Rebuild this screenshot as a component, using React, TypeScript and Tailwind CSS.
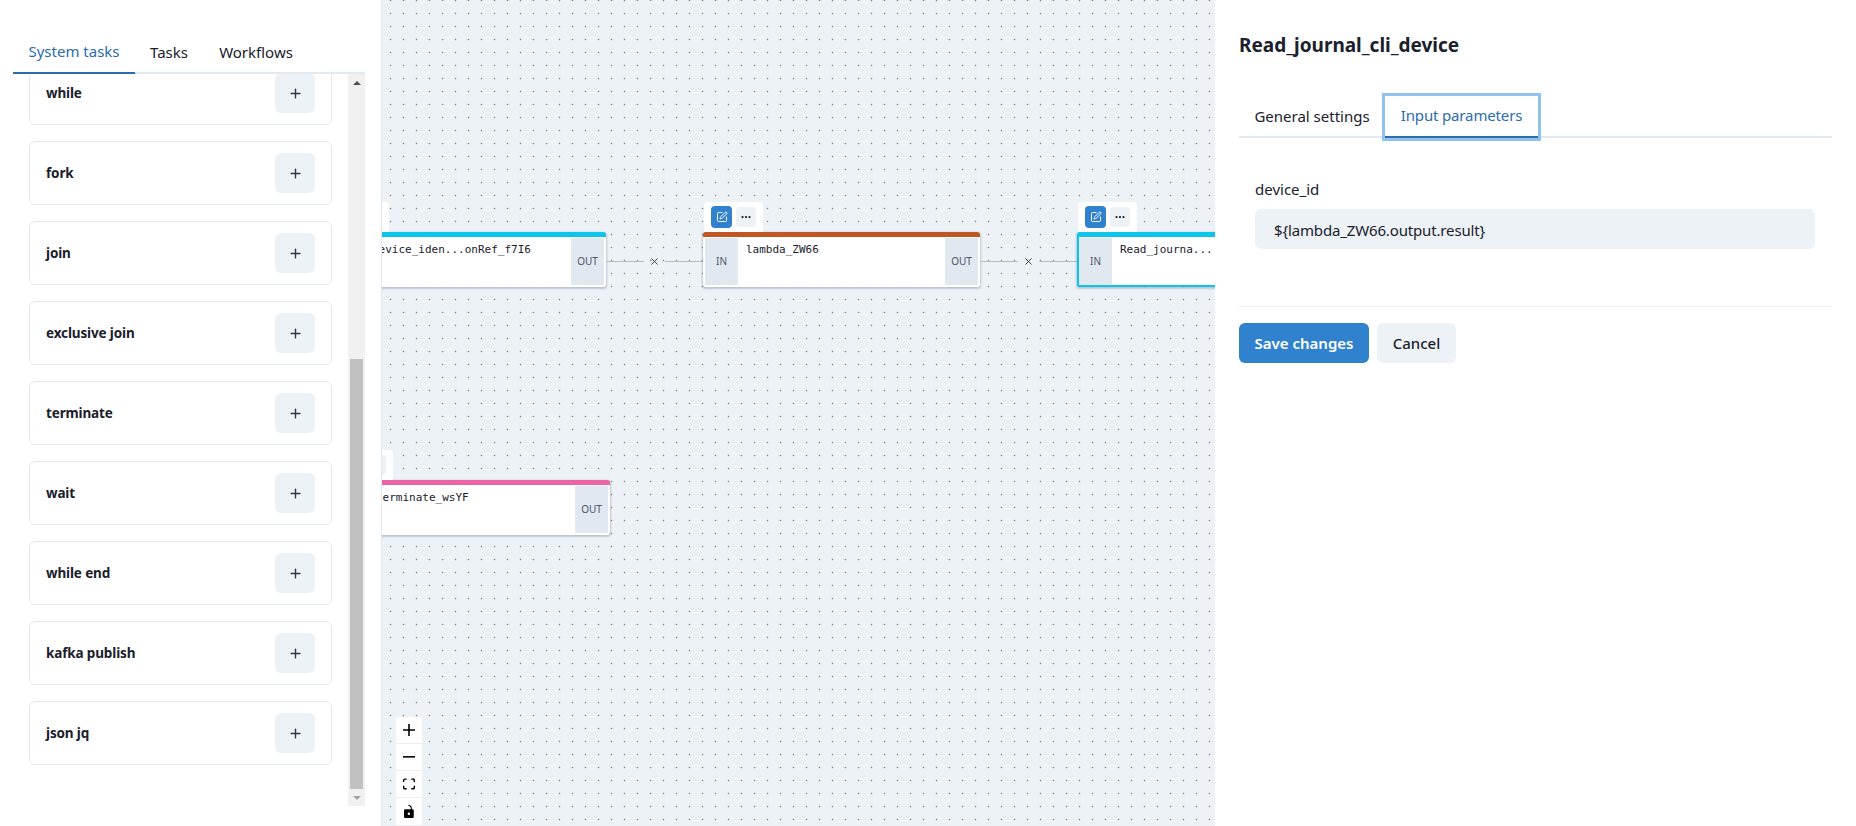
import * as React from "react"
import { Plus, X, SquarePen, MoreHorizontal } from "lucide-react"

const systemTasks = ["while", "fork", "join", "exclusive join", "terminate", "wait", "while end", "kafka publish", "json jq"]

function TaskCard({ name }: { name: string }) {
  return (
    <div className="flex h-16 items-center justify-between rounded-md border border-[#e2e8f0] bg-white pl-4 pr-4">
      <span className="text-[13.5px] font-bold tracking-[-0.01em] text-[#1a202c]">{name}</span>
      <button className="flex h-10 w-10 items-center justify-center rounded-md bg-[#edf2f7] text-[#2d3748]">
        <Plus className="h-[15px] w-[15px]" strokeWidth={2.2} />
      </button>
    </div>
  )
}

function Scrollbar() {
  return (
    <div className="flex w-[17px] shrink-0 flex-col bg-[#f1f1f1]">
      <div className="flex h-[17px] items-center justify-center">
        <div className="h-0 w-0 border-x-[4px] border-b-[4px] border-x-transparent border-b-[#505050]" />
      </div>
      <div className="flex-1" />
      <div className="mx-[2px] h-[430px] bg-[#c1c1c1]" />
      <div className="flex h-[17px] items-center justify-center">
        <div className="h-0 w-0 border-x-[4px] border-t-[4px] border-x-transparent border-t-[#a3a3a3]" />
      </div>
    </div>
  )
}

function Port({ label }: { label: string }) {
  return (
    <div className="flex w-[33px] shrink-0 items-center justify-center bg-[#e2e8f0] text-[10px] text-[#4a5568]">
      {label}
    </div>
  )
}

function FlowNode({
  className,
  bar,
  label,
}: {
  className: string
  bar: string
  label: string
}) {
  return (
    <div className={`absolute w-[277px] ${className}`}>
      <div className="absolute -top-[30px] left-[1px] flex h-[30px] w-[59px] items-center gap-[4px] rounded-t-[4px] bg-white pl-[7px]">
        <div className="flex h-[22px] w-[21px] items-center justify-center rounded-[4px] bg-[#3182ce] text-white">
          <SquarePen className="h-[12px] w-[12px]" strokeWidth={2} />
        </div>
        <div className="flex h-[20px] w-[20px] items-center justify-center rounded-[4px] bg-[#edf2f7] text-[#1a202c]">
          <MoreHorizontal className="h-[12px] w-[12px]" strokeWidth={2.5} />
        </div>
      </div>
      <div className={`flex h-[55px] rounded-[3px] bg-white shadow-[0_1px_2px_1px_rgba(100,116,139,0.35)] ${bar}`}>
        <Port label="IN" />
        <div className="flex-1 pl-[8px] pt-[4px] font-['DejaVu_Sans_Mono',monospace] text-[11px] leading-[16px] text-[#1a202c]">
          {label}
        </div>
        <Port label="OUT" />
      </div>
    </div>
  )
}

function Edge({ className }: { className: string }) {
  return (
    <div className={`absolute flex h-[12px] w-[97px] items-center ${className}`}>
      <div className="h-[1px] flex-1 bg-[#b8bcc4]" />
      <X className="mx-[5px] h-[11px] w-[11px] text-[#2d3748]" strokeWidth={2} />
      <div className="h-[1px] flex-1 bg-[#b8bcc4]" />
    </div>
  )
}

function ControlButton({ children, last }: { children: React.ReactNode; last?: boolean }) {
  return (
    <div className={`flex h-[27px] w-[26px] items-center justify-center bg-white ${last ? "" : "border-b border-[#eeeeee]"}`}>
      {children}
    </div>
  )
}

function FlowControls() {
  return (
    <div className="absolute left-[14px] top-[717px] flex flex-col">
      <ControlButton>
        <svg viewBox="0 0 32 32" className="h-[12px] w-[12px]">
          <path d="M32 18.133H18.133V32h-4.266V18.133H0v-4.266h13.867V0h4.266v13.867H32z" />
        </svg>
      </ControlButton>
      <ControlButton>
        <svg viewBox="0 0 32 5" className="h-[2px] w-[12px]">
          <path d="M0 0h32v4.2H0z" />
        </svg>
      </ControlButton>
      <ControlButton>
        <svg viewBox="0 0 32 30" className="h-[12px] w-[12px]">
          <path d="M3.692 4.63c0-.53.4-.938.939-.938h5.215V0H4.708C2.13 0 0 2.054 0 4.63v5.216h3.692V4.631zM27.354 0h-5.2v3.692h5.17c.53 0 .984.4.984.939v5.215H32V4.631A4.624 4.624 0 0027.354 0zm.954 24.83c0 .532-.4.94-.939.94h-5.215v3.768h5.215c2.577 0 4.631-2.13 4.631-4.707v-5.139h-3.692v5.139zm-23.677.94c-.531 0-.939-.4-.939-.94v-5.138H0v5.139c0 2.577 2.13 4.707 4.708 4.707h5.138V25.77H4.631z" />
        </svg>
      </ControlButton>
      <ControlButton last>
        <svg viewBox="0 0 25 32" className="h-[13px] w-[10px]">
          <path d="M21.333 10.667H19.81V7.619C19.81 3.429 16.38 0 12.19 0c-4.114 1.828-1.37 2.133.305 2.438 1.676.305 4.42 2.59 4.42 5.181v3.048H3.047A3.056 3.056 0 000 13.714v15.238A3.056 3.056 0 003.048 32h18.285a3.056 3.056 0 003.048-3.048V13.714a3.056 3.056 0 00-3.048-3.047zM12.19 24.533a3.056 3.056 0 01-3.047-3.047 3.056 3.056 0 013.047-3.048 3.056 3.056 0 013.048 3.048 3.056 3.056 0 01-3.048 3.047z" />
        </svg>
      </ControlButton>
    </div>
  )
}

export default function App() {
  return (
    <div className="flex h-[826px] w-[1856px] overflow-hidden bg-white font-['Noto_Sans',sans-serif] text-[#1a202c]">
      {/* task list */}
      <div className="flex w-[381px] shrink-0 flex-col pb-[20px] pl-[13px] pr-[16px] pt-[32px]">
        <div className="flex h-[42px] shrink-0 border-b-2 border-[#e2e8f0] text-[15px]">
          <div className="-mb-[2px] flex w-[122px] items-center justify-center border-b-2 border-[#2b6cb0] pb-[2px] text-[#2b6cb0]">System tasks</div>
          <div className="-mb-[2px] flex w-[68px] items-center justify-center pb-[2px]">Tasks</div>
          <div className="-mb-[2px] flex w-[106px] items-center justify-center pb-[2px]">Workflows</div>
        </div>
        <div className="flex min-h-0 flex-1">
          <div className="min-w-0 flex-1 overflow-hidden pl-[16px] pr-[16px]">
            <div className="-mt-[13px] flex flex-col gap-4">
              {systemTasks.map((t) => (
                <TaskCard key={t} name={t} />
              ))}
            </div>
          </div>
          <Scrollbar />
        </div>
      </div>

      {/* canvas */}
      <div className="relative w-[834px] shrink-0 overflow-hidden border-l border-[#e2e8f0] bg-[#edf2f7] bg-[radial-gradient(circle,#7d7d86_0.75px,transparent_1.05px)] bg-[size:13px_13px] bg-[position:2px_7px]">
        <FlowNode className="left-[-53px] top-[232px]" bar="border-t-[5px] border-[#0bc5ea] p-[1px] px-[2px] pb-[2px]" label="Device_iden...onRef_f7I6" />
        <Edge className="left-[224px] top-[255px]" />
        <FlowNode className="left-[321px] top-[232px]" bar="border-t-[5px] border-[#c05621] p-[1px] px-[2px] pb-[2px]" label="lambda_ZW66" />
        <Edge className="left-[598px] top-[255px]" />
        <FlowNode className="left-[695px] top-[232px]" bar="border-2 border-t-[5px] border-[#0bc5ea] pt-[1px]" label="Read_journa..." />
        <FlowNode className="left-[-49px] top-[480px]" bar="border-t-[5px] border-[#ed64a6] p-[1px] px-[2px] pb-[2px]" label="terminate_wsYF" />
        <FlowControls />
      </div>

      {/* task settings */}
      <div className="flex min-w-0 flex-1 flex-col px-[24px] pt-[32px]">
        <h2 className="h-[27px] text-[19px] font-bold leading-[27px]">Read_journal_cli_device</h2>
        <div className="mt-[37px] flex h-[42px] border-b-2 border-[#e2e8f0]">
          <div className="-mb-[2px] flex w-[146px] items-center justify-center pb-[2px] text-[15px]">General settings</div>
          <div className="-mb-[2px] flex w-[153px] items-center justify-center border-b-2 border-[#2b6cb0] pb-[2px] text-[15px] tracking-[-0.01em] text-[#2b6cb0] outline-[3px] outline-[#90c2ee]">Input parameters</div>
        </div>
        <div className="pl-[16px] pr-[17px] pt-[39px]">
          <div className="text-[15px] leading-[24px]">device_id</div>
          <div className="mt-[8px] flex h-[40px] items-center rounded-md bg-[#edf2f7] px-[19px] pt-[2px] text-[15px] tracking-[-0.01em]">{"${lambda_ZW66.output.result}"}</div>
        </div>
        <div className="mt-[57px] h-[1px] bg-[#edf2f7]" />
        <div className="mt-[16px] flex gap-[8px]">
          <button className="h-[40px] w-[130px] rounded-md bg-[#3182ce] text-[15px] font-semibold text-white">Save changes</button>
          <button className="h-[40px] w-[79px] rounded-md bg-[#edf2f7] text-[15px] font-medium">Cancel</button>
        </div>
      </div>
    </div>
  )
}
